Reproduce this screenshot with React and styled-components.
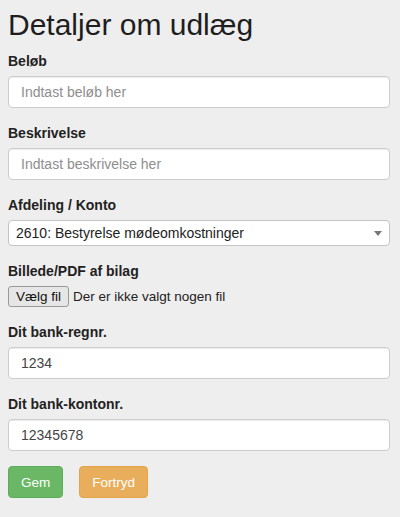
import styled, { createGlobalStyle } from "styled-components";

const Global = createGlobalStyle`
    html, body {
        margin: 0;
        background-color: #EEEEEE;
    }
    body {
        font-family: "Liberation Sans", Arial, sans-serif;
        font-size: 14px;
        line-height: 20px;
        color: #333333;
    }
    * {
        box-sizing: border-box;
    }
`

export default function App(){

    return (
        <>
            <Global />
            <Page>
                <Title>Detaljer om udlæg</Title>
                <Group>
                    <Label>Beløb</Label>
                    <Input placeholder="Indtast beløb her" />
                </Group>
                <Group>
                    <Label>Beskrivelse</Label>
                    <Input placeholder="Indtast beskrivelse her" />
                </Group>
                <Group>
                    <Label>Afdeling / Konto</Label>
                    <SelectBox>
                        <Select defaultValue="2610">
                            <option value="2610">2610: Bestyrelse mødeomkostninger</option>
                        </Select>
                    </SelectBox>
                </Group>
                <Group>
                    <Label>Billede/PDF af bilag</Label>
                    <FileRow>
                        <FileButton type="button">Vælg fil</FileButton>
                        <span>Der er ikke valgt nogen fil</span>
                    </FileRow>
                </Group>
                <Group>
                    <Label>Dit bank-regnr.</Label>
                    <Input defaultValue="1234" />
                </Group>
                <Group>
                    <Label>Dit bank-kontonr.</Label>
                    <Input defaultValue="12345678" />
                </Group>
                <Actions>
                    <Button $color="#6AB866" $border="#5DAE59">Gem</Button>
                    <Button $color="#E9AE5C" $border="#E6A448">Fortryd</Button>
                </Actions>
            </Page>
        </>
    )
}

const Page = styled.div`
    padding: 8px 10px 20px 8px;
`
const Title = styled.h2`
    font-size: 30px;
    font-weight: 400;
    line-height: 33px;
    margin: 0 0 10px 0;
    color: #1E1E1E;
`
const Group = styled.div`
    display: flex;
    flex-direction: column;
    margin-bottom: 15px;
`
const Label = styled.label`
    font-weight: 700;
    margin-bottom: 5px;
    color: #222222;
`
const Input = styled.input`
    height: 32px;
    width: 100%;
    padding: 6px 12px;
    font-family: inherit;
    font-size: 14px;
    color: #444444;
    background-color: #FFFFFF;
    border: 1px solid #CCCCCC;
    border-radius: 4px;
    box-shadow: inset 0 1px 1px rgba(0, 0, 0, 0.075);
    outline: none;

    &::placeholder{
        color: #8E8E8E;
    }
`
const SelectBox = styled.div`
    position: relative;

    &::after{
        content: "";
        position: absolute;
        right: 8px;
        top: 11px;
        border-left: 4px solid transparent;
        border-right: 4px solid transparent;
        border-top: 5px solid #777777;
    }
`
const Select = styled.select`
    appearance: none;
    width: 100%;
    height: 26px;
    padding: 0 24px 0 7px;
    font-family: inherit;
    font-size: 14px;
    color: #222222;
    background-color: #FFFFFF;
    border: 1px solid #C4C4C4;
    border-radius: 4px;
    outline: none;
`
const FileRow = styled.div`
    display: flex;
    align-items: center;
    gap: 4px;
    height: 21px;
    font-size: 13.5px;
    color: #222222;
`
const FileButton = styled.button`
    height: 21px;
    padding: 0 7px;
    font-family: inherit;
    font-size: 13.5px;
    color: #111111;
    background-color: #E6E6E6;
    border: 1px solid #999999;
    border-radius: 3px;
`
const Actions = styled.div`
    display: flex;
    gap: 16px;
`
const Button = styled.button`
    height: 32px;
    padding: 6px 12px;
    font-family: inherit;
    font-size: 13.5px;
    color: #FFFFFF;
    background-color: ${p => p.$color};
    border: 1px solid ${p => p.$border};
    border-radius: 4px;
`
